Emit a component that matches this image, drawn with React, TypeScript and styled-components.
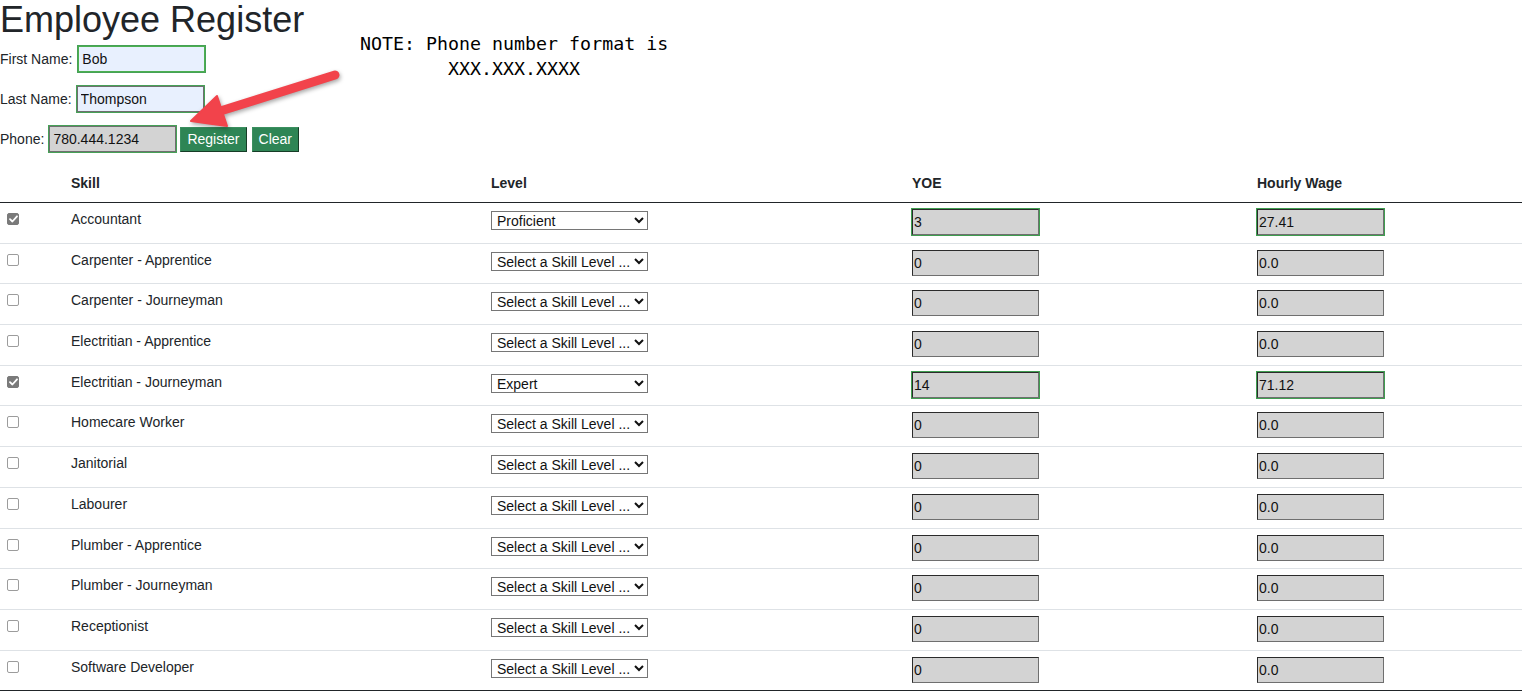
import React from "react";
import styled, { createGlobalStyle } from "styled-components";

const GlobalStyle = createGlobalStyle`
  html, body {
    margin: 0;
    padding: 0;
    background: #ffffff;
  }
  body {
    font-family: "Liberation Sans", Arial, sans-serif;
    font-size: 14px;
    color: #212529;
  }
  * { box-sizing: border-box; }
`;

const Page = styled.div`
  position: relative;
  width: 1522px;
`;

const Top = styled.div`
  display: flex;
  align-items: flex-start;
`;

const FormColumn = styled.div`
  width: 360px;
  display: flex;
  flex-direction: column;
`;

const Title = styled.h1`
  margin: 0;
  font-size: 36px;
  line-height: 40px;
  font-weight: 400;
  color: #212529;
  white-space: nowrap;
`;

const FieldStack = styled.div`
  margin-top: 6px;
  display: flex;
  flex-direction: column;
  gap: 14px;
`;

const FieldRow = styled.div`
  display: flex;
  align-items: center;
  gap: 5px;
  height: 26px;
`;

const Label = styled.label`
  font-size: 14px;
  line-height: 20px;
  color: #212529;
`;

const FieldInput = styled.input<{ $bg: string; $focused?: boolean; $shift?: number }>`
  width: 127px;
  height: 26px;
  padding: 0 3px;
  margin-left: ${(p) => p.$shift ?? 0}px;
  font-family: "Liberation Sans", Arial, sans-serif;
  font-size: 14px;
  color: #111;
  background: ${(p) => p.$bg};
  border: 1px solid ${(p) => (p.$focused ? "#4caf50" : "#6f6f6f")};
  outline: 1px solid #46a157;
  outline-offset: 0;
  border-radius: 0;
`;

const ActionButton = styled.button<{ $push?: number }>`
  height: 25px;
  padding: 0 6px;
  margin-left: ${(p) => p.$push ?? 0}px;
  font-family: "Liberation Sans", Arial, sans-serif;
  font-size: 14px;
  color: #ffffff;
  background: #2e8555;
  border: 1px solid;
  border-color: #3b8f5f #173c27 #173c27 #3b8f5f;
  border-radius: 0;
  cursor: pointer;
`;

const Note = styled.div`
  margin-top: 31px;
  font-family: "DejaVu Sans Mono", "Liberation Mono", monospace;
  font-size: 18.3px;
  line-height: 25px;
  color: #000000;
  text-align: center;
  white-space: nowrap;
`;

const ArrowOverlay = styled.svg`
  position: absolute;
  left: 0;
  top: 0;
  width: 360px;
  height: 160px;
  pointer-events: none;
  overflow: visible;
  filter: drop-shadow(1px 2px 2px rgba(0, 0, 0, 0.35));
`;

const SkillTable = styled.table`
  width: 1522px;
  margin-top: 10px;
  border-collapse: collapse;
  table-layout: fixed;
  border-bottom: 1px solid #212529;
`;

const Col = styled.col<{ $w: number }>`
  width: ${(p) => p.$w}px;
`;

const Th = styled.th`
  text-align: left;
  font-weight: 700;
  font-size: 14px;
  line-height: 21px;
  padding: 11px 7px 8px;
  border-bottom: 1px solid #212529;
  color: #212529;
`;

const Row = styled.tr`
  height: 40.7px;
`;

const Td = styled.td`
  vertical-align: top;
  padding: 6px 7px 0;
  font-size: 14px;
  line-height: 21px;
  color: #212529;
  border-top: 1px solid #dee2e6;
`;

const CheckBox = styled.span<{ $checked: boolean }>`
  display: flex;
  align-items: center;
  justify-content: center;
  margin-top: 4px;
  width: 12px;
  height: 12px;
  border-radius: 2px;
  border: 1px solid ${(p) => (p.$checked ? "#7a7a7a" : "#9c9c9c")};
  background: ${(p) => (p.$checked ? "#7a7a7a" : "#ffffff")};
`;

const LevelSelect = styled.select`
  display: block;
  margin-top: 2px;
  width: 157px;
  height: 19px;
  padding: 0 0 0 1px;
  font-family: "Liberation Sans", Arial, sans-serif;
  font-size: 14px;
  color: #111;
  background: #ffffff;
  border: 1px solid #767676;
  border-radius: 0;
`;

const NumberBox = styled.input<{ $valid?: boolean }>`
  display: block;
  width: 127px;
  height: 26px;
  padding: 0 1px;
  font-family: "Liberation Sans", Arial, sans-serif;
  font-size: 14px;
  color: #111;
  background: #d3d3d3;
  border: 1px solid;
  border-color: #2b2b2b #6f6f6f #6f6f6f #2b2b2b;
  border-radius: 0;
  outline: ${(p) => (p.$valid ? "1px solid #3f9e50" : "none")};
  outline-offset: 0;
`;

type Skill = {
  name: string;
  checked?: boolean;
  level?: string;
  yoe: string;
  wage: string;
};

const skills: Skill[] = [
  { name: "Accountant", checked: true, level: "Proficient", yoe: "3", wage: "27.41" },
  { name: "Carpenter - Apprentice", yoe: "0", wage: "0.0" },
  { name: "Carpenter - Journeyman", yoe: "0", wage: "0.0" },
  { name: "Electritian - Apprentice", yoe: "0", wage: "0.0" },
  { name: "Electritian - Journeyman", checked: true, level: "Expert", yoe: "14", wage: "71.12" },
  { name: "Homecare Worker", yoe: "0", wage: "0.0" },
  { name: "Janitorial", yoe: "0", wage: "0.0" },
  { name: "Labourer", yoe: "0", wage: "0.0" },
  { name: "Plumber - Apprentice", yoe: "0", wage: "0.0" },
  { name: "Plumber - Journeyman", yoe: "0", wage: "0.0" },
  { name: "Receptionist", yoe: "0", wage: "0.0" },
  { name: "Software Developer", yoe: "0", wage: "0.0" },
];

const levels = ["Select a Skill Level ...", "Novice", "Proficient", "Expert"];

function Arrow() {
  return (
    <ArrowOverlay viewBox="0 0 360 160">
      <line x1="222" y1="110.5" x2="335" y2="75" stroke="#f2434b" strokeWidth="9" strokeLinecap="round" />
      <polygon points="191,121 217,96 227,126" fill="#f2434b" stroke="#f2434b" strokeWidth="2" strokeLinejoin="round" />
    </ArrowOverlay>
  );
}

function SkillCheck({ checked }: { checked: boolean }) {
  return (
    <CheckBox $checked={checked} role="checkbox" aria-checked={checked} aria-disabled="true">
      {checked && (
        <svg width="9" height="8" viewBox="0 0 9 8">
          <path d="M1 4.2 L3.4 6.5 L8 1.3" fill="none" stroke="#ffffff" strokeWidth="1.8" strokeLinecap="round" strokeLinejoin="round" />
        </svg>
      )}
    </CheckBox>
  );
}

export default function App() {
  return (
    <>
      <GlobalStyle />
      <Page>
        <Top>
          <FormColumn>
            <Title>Employee Register</Title>
            <FieldStack>
              <FieldRow>
                <Label>First Name:</Label>
                <FieldInput $bg="#e8f0fe" $focused $shift={1} defaultValue="Bob" />
              </FieldRow>
              <FieldRow>
                <Label>Last Name:</Label>
                <FieldInput $bg="#e8f0fe" defaultValue="Thompson" />
              </FieldRow>
              <FieldRow>
                <Label>Phone:</Label>
                <FieldInput $bg="#d3d3d3" defaultValue="780.444.1234" />
                <ActionButton $push={-1}>Register</ActionButton>
                <ActionButton>Clear</ActionButton>
              </FieldRow>
            </FieldStack>
          </FormColumn>
          <Note>
            NOTE: Phone number format is
            <br />
            XXX.XXX.XXXX
          </Note>
        </Top>
        <Arrow />
        <SkillTable>
          <colgroup>
            <Col $w={64} />
            <Col $w={420} />
            <Col $w={421} />
            <Col $w={345} />
            <Col $w={272} />
          </colgroup>
          <thead>
            <tr>
              <Th></Th>
              <Th>Skill</Th>
              <Th>Level</Th>
              <Th>YOE</Th>
              <Th>Hourly Wage</Th>
            </tr>
          </thead>
          <tbody>
            {skills.map((s) => (
              <Row key={s.name}>
                <Td>
                  <SkillCheck checked={!!s.checked} />
                </Td>
                <Td>{s.name}</Td>
                <Td>
                  <LevelSelect defaultValue={s.level ?? levels[0]}>
                    {levels.map((l) => (
                      <option key={l} value={l}>
                        {l}
                      </option>
                    ))}
                  </LevelSelect>
                </Td>
                <Td>
                  <NumberBox $valid={!!s.checked} defaultValue={s.yoe} />
                </Td>
                <Td>
                  <NumberBox $valid={!!s.checked} defaultValue={s.wage} />
                </Td>
              </Row>
            ))}
          </tbody>
        </SkillTable>
      </Page>
    </>
  );
}
